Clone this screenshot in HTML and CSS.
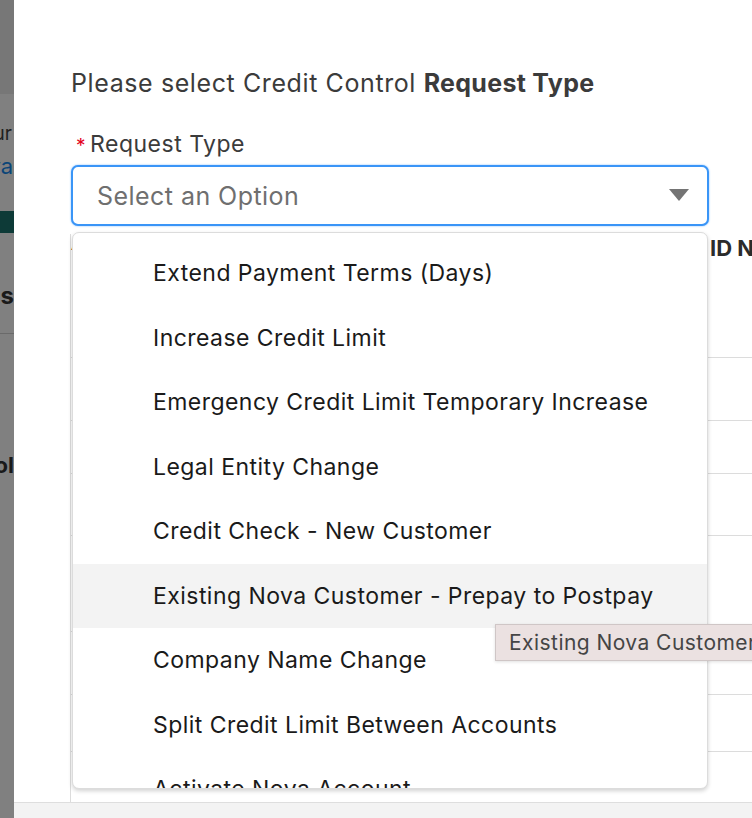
FILE: index.html
```html
<!DOCTYPE html>
<html lang="en">
<head>
<meta charset="utf-8">
<title>Credit Control Request</title>
<link rel="stylesheet" href="styles.css">
</head>
<body>
<div class="page">
  <aside class="backdrop">
    <div class="bd-top"></div>
    <div class="bd-line bd-t1"><span>Your</span></div>
    <div class="bd-line bd-t2"><span>Nova</span></div>
    <div class="bd-bar"></div>
    <div class="bd-line bd-t3"><span>Details</span></div>
    <div class="bd-rule"></div>
    <div class="bd-line bd-t4"><span>Control</span></div>
  </aside>
  <section class="modal">
    <div class="modal-body">
      <h2 class="title">Please select Credit Control <strong>Request Type</strong></h2>
      <div class="field-label"><span class="req">*</span>Request Type</div>
      <div class="combo">
        <div class="combo-input">
          <span class="placeholder">Select an Option</span>
          <svg class="caret" width="20" height="12" viewBox="0 0 20 12"><path d="M0 0 H20 L10 12 Z" fill="#747474"/></svg>
        </div>
        <ul class="listbox">
          <li class="option">Extend Payment Terms (Days)</li>
          <li class="option">Increase Credit Limit</li>
          <li class="option">Emergency Credit Limit Temporary Increase</li>
          <li class="option">Legal Entity Change</li>
          <li class="option">Credit Check - New Customer</li>
          <li class="option is-hover">Existing Nova Customer - Prepay to Postpay</li>
          <li class="option">Company Name Change</li>
          <li class="option">Split Credit Limit Between Accounts</li>
          <li class="option">Activate Nova Account</li>
        </ul>
      </div>
      <div class="table">
        <div class="row row-head"><div class="cell-a">Account Name</div><div class="cell-b">ID Number</div></div>
        <div class="row r1"></div>
        <div class="row r2"></div>
        <div class="row r3"></div>
        <div class="row r4"></div>
        <div class="row r5"></div>
        <div class="row r6"></div>
        <div class="row r7"></div>
      </div>
      <div class="tooltip">Existing Nova Customer - Prepay to Postpay</div>
    </div>
    <div class="modal-footer"></div>
  </section>
</div>
</body>
</html>
```
FILE: styles.css
```css
* { box-sizing: border-box; }
html, body { margin: 0; padding: 0; }
body {
  width: 752px;
  height: 818px;
  overflow: hidden;
  font-family: "Inter", "Roboto", "Liberation Sans", sans-serif;
  background: #fff;
}
.page {
  display: flex;
  height: 818px;
  overflow: hidden;
}

/* dimmed page behind modal */
.backdrop {
  width: 14px;
  flex: none;
  background: #808080;
  display: flex;
  flex-direction: column;
  overflow: hidden;
}
.bd-top { height: 94px; background: #777; flex: none; }
.bd-line {
  display: flex;
  justify-content: flex-end;
  white-space: nowrap;
  overflow: hidden;
  flex: none;
}
.bd-t1 { margin-top: 28px; font-size: 19px; line-height: 24px; color: #1f1f1f; margin-right: 2px; }
.bd-t2 { margin-top: 6px; font-size: 22px; line-height: 28px; color: #0a4578; margin-right: 1px; }
.bd-bar { margin-top: 31px; height: 22px; background: #0d3a37; flex: none; }
.bd-t3 { margin-top: 48px; font-size: 24px; line-height: 30px; color: #1a1a1a; font-weight: 700; }
.bd-rule { margin-top: 22px; height: 1px; background: #6a6a6a; flex: none; }
.bd-t4 { margin-top: 117px; font-size: 22px; line-height: 28px; color: #1a1a1a; font-weight: 700; }

/* modal */
.modal {
  flex: 1;
  display: flex;
  flex-direction: column;
  min-width: 0;
}
.modal-body {
  flex: 1;
  position: relative;
  padding: 68px 0 0 57px;
  overflow: hidden;
}
.title {
  margin: 0;
  font-size: 25px;
  line-height: 30px;
  font-weight: 400;
  letter-spacing: 0.6px;
  color: #3b3b3b;
  white-space: nowrap;
}
.title strong { font-weight: 700; letter-spacing: 0.3px; }
.field-label {
  margin-top: 33px;
  font-size: 23px;
  line-height: 26px;
  letter-spacing: 0.5px;
  color: #3b3b3b;
  display: flex;
  align-items: baseline;
}
.req { color: #e3001b; margin: 0 4px 0 5px; font-size: 19px; }
.combo {
  position: relative;
  margin-top: 6px;
  width: 638px;
}
.combo-input {
  height: 61px;
  border: 2px solid #3a95f7;
  border-radius: 7px;
  box-shadow: 0 0 2px #7ab8ff;
  display: flex;
  align-items: center;
  justify-content: space-between;
  padding: 0 18px 0 24px;
  background: #fff;
}
.placeholder { font-size: 25px; letter-spacing: 0.45px; color: #6f6f6f; }
.caret { display: block; margin-top: -2px; }

.listbox {
  position: absolute;
  z-index: 2;
  top: 67px;
  left: 1px;
  width: 636px;
  height: 557px;
  margin: 0;
  padding: 8px 0 0;
  list-style: none;
  background: #fff;
  border: 1px solid #dcdcdc;
  border-radius: 7px;
  box-shadow: 0 2px 4px rgba(0,0,0,0.18);
  overflow: hidden;
}
.option {
  height: 64.5px;
  display: flex;
  align-items: center;
  padding-left: 80px;
  font-size: 23px;
  letter-spacing: 0.45px;
  color: #1a1a1a;
  white-space: nowrap;
}
.option.is-hover { background: #f3f3f3; }

/* table behind the dropdown */
.table {
  margin-top: 8px;
  margin-left: -1px;
  width: 800px;
  border-left: 1px solid #dcdcdc;
}
.row { border-bottom: 1px solid #dcdcdc; }
.row-head {
  height: 124px;
  display: flex;
  align-items: flex-start;
}
.cell-a { width: 639px; flex: none; }
.cell-b {
  font-size: 22px;
  line-height: 28px;
  font-weight: 700;
  color: #2b2b2b;
  white-space: nowrap;
}
.r1 { height: 63px; }
.r2 { height: 53px; }
.r3 { height: 62px; }
.r4 { height: 96px; }
.r5 { height: 63px; }
.r6 { height: 57px; }
.r7 { height: 60px; border-bottom: none; }

.tooltip {
  position: absolute;
  z-index: 3;
  left: 481px;
  top: 624px;
  height: 37px;
  padding: 0 13px;
  display: flex;
  align-items: center;
  white-space: nowrap;
  background: #ebe1e1;
  border: 1px solid #cfc6c6;
  box-shadow: 0 1px 3px rgba(0,0,0,0.12);
  font-size: 21px;
  letter-spacing: 0.45px;
  color: #454545;
}

.modal-footer {
  height: 16px;
  flex: none;
  background: #f3f3f3;
  border-top: 1px solid #dedede;
}
```
